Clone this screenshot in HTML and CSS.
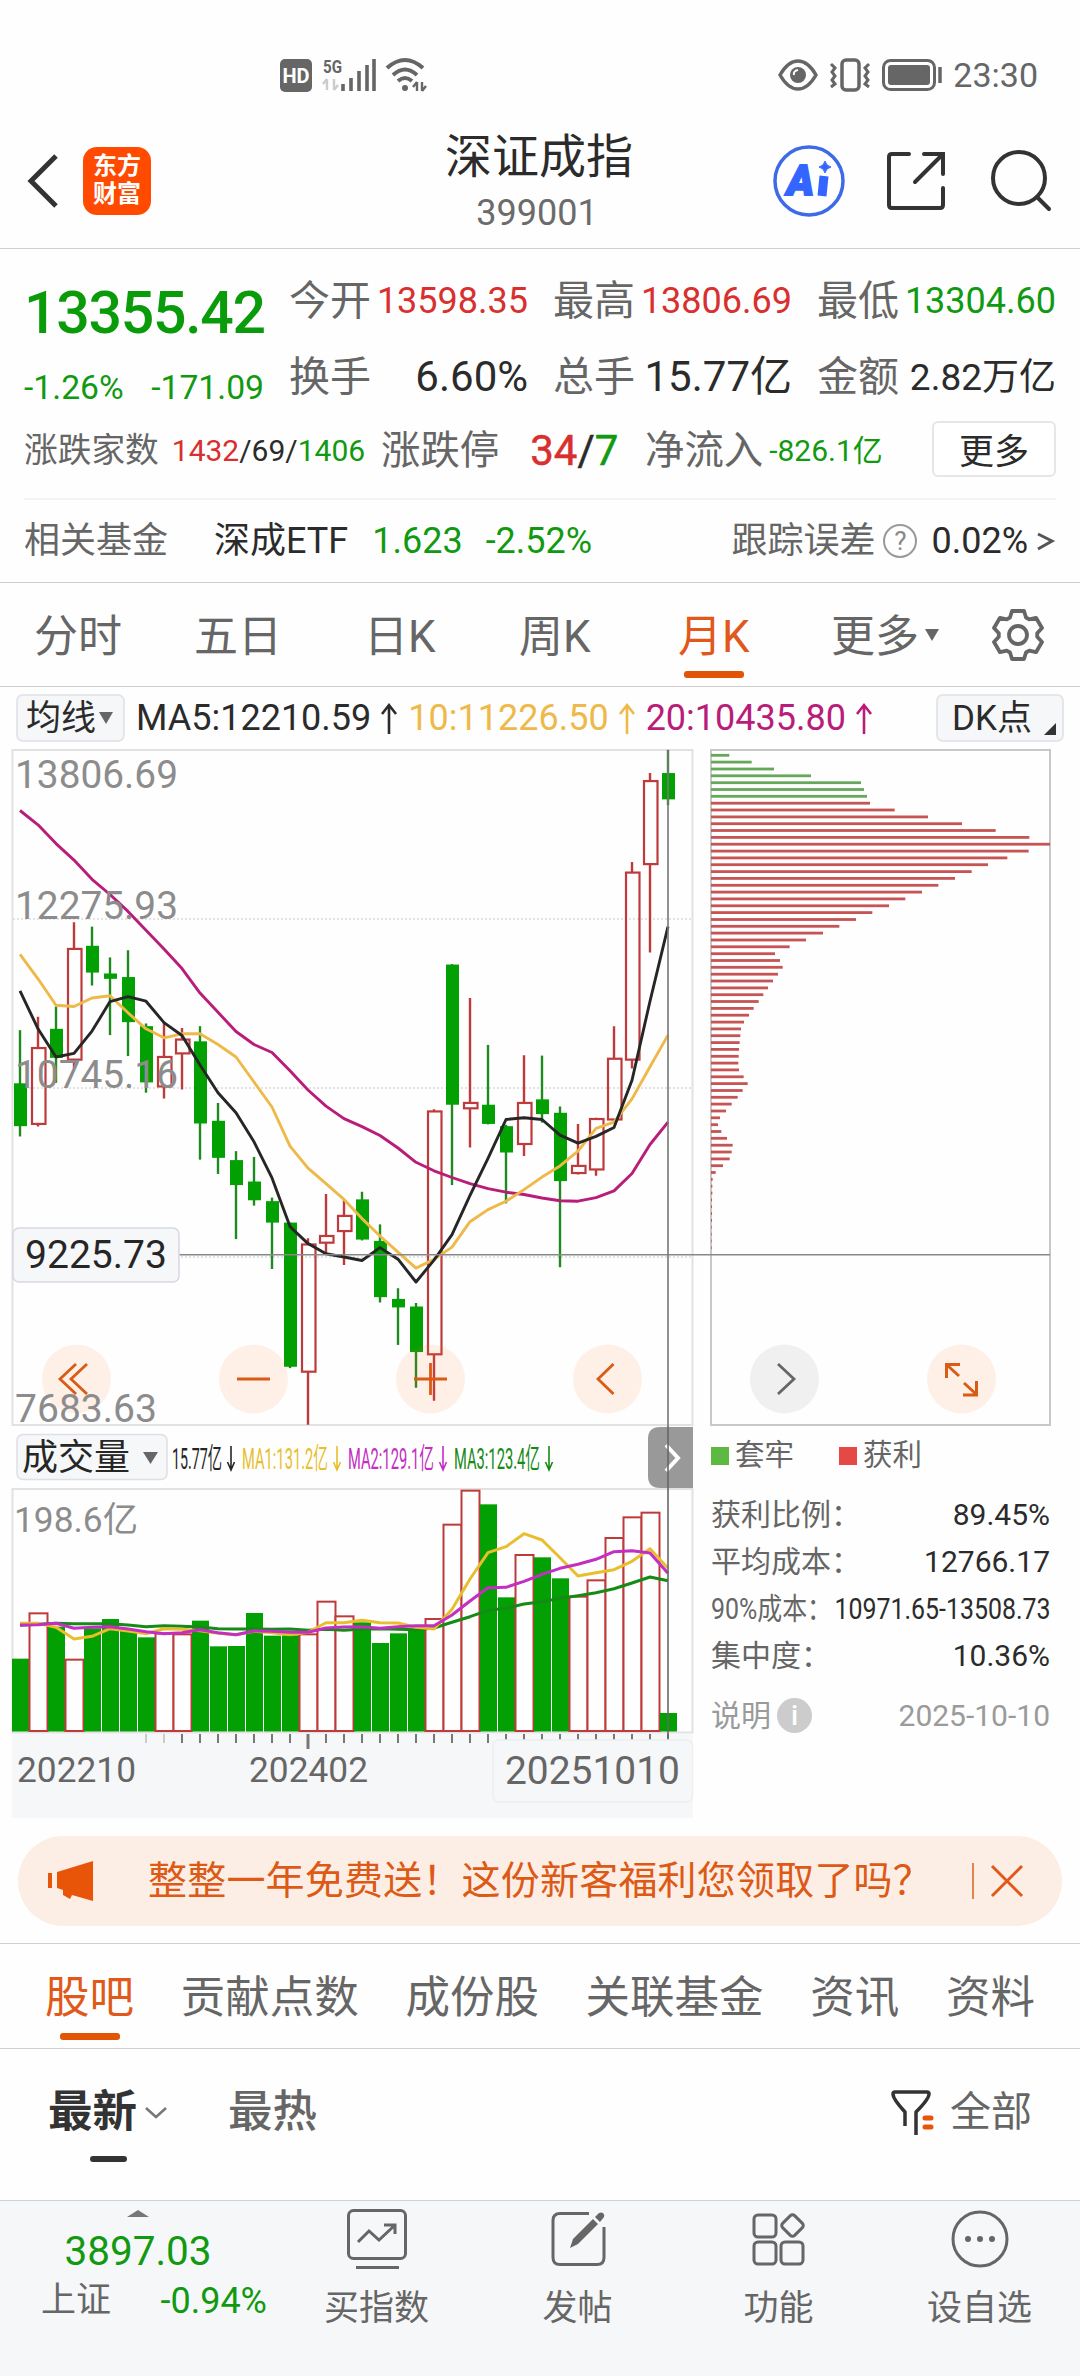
FILE: index.html
```html
<!DOCTYPE html>
<html lang="zh-CN">
<head>
  <meta charset="UTF-8">
  <title>深证成指 399001</title>
  <link rel="stylesheet" href="styles.css">
</head>
<body>
  <div class="status-bar">
    <div class="status-left">
      <span class="hd">HD</span>
      <svg class="signal" width="54" height="36" viewBox="0 0 54 36">
        <text x="0" y="16" class="net" textLength="19" lengthAdjust="spacingAndGlyphs">5G</text>
        <path d="M4 22v11M4 22l-4 5M11 33V22M11 33l4-5" stroke="#ccc" stroke-width="2.4" fill="none"/>
        <path d="M20 27v7M28 21v13M36 14v20M44 8v26M51 2v32" stroke="#666" stroke-width="3.6"/>
      </svg>
      <svg class="wifi" width="42" height="36" viewBox="0 0 42 36" fill="none" stroke="#666" stroke-width="4">
        <path d="M2 11Q20-5 38 11M8 18Q20 7 32 18M13 24Q20 18 27 24"/>
        <circle cx="20" cy="31" r="3" fill="#666" stroke="none"/>
        <path d="M32 25v9M32 25l-4 5M37 34v-9M37 34l4-5" stroke-width="2.4"/>
      </svg>
    </div>
    <div class="status-right">
      <svg width="40" height="36" viewBox="0 0 40 36" fill="none" stroke="#666" stroke-width="3.5">
        <path d="M2 18Q10 4 20 4t18 14Q30 32 20 32T2 18z"/>
        <circle cx="20" cy="18" r="8" fill="#666" stroke="none"/>
        <path d="M16 18q-1-4 4-5" stroke="#fff" stroke-width="2"/>
      </svg>
      <svg width="42" height="36" viewBox="0 0 42 36" fill="none" stroke="#666" stroke-width="3.500">
        <rect x="13" y="3" width="17" height="30" rx="4"/>
        <path d="M2 7l4 4-3 4 3 4-3 4 3 4-4 3M40 7l-4 4 3 4-3 4 3 4-3 4 4 3" stroke-width="3"/>
      </svg>
      <svg width="60" height="36" viewBox="0 0 60 36">
        <rect x="1.5" y="3.5" width="51" height="29" rx="7" fill="none" stroke="#666" stroke-width="3"/>
        <rect x="6" y="8" width="42" height="20" rx="3" fill="#666"/>
        <path d="M58 10v16" stroke="#666" stroke-width="3.5"/>
      </svg>
      <span class="time">23:30</span>
    </div>
  </div>

  <header class="nav">
    <svg class="back" width="34" height="58" viewBox="0 0 34 58"><path d="M30 4L5 29l25 25" fill="none" stroke="#333" stroke-width="5"/></svg>
    <div class="logo">东方<br>财富</div>
    <div class="title">
      <h1>深证成指</h1>
      <p>399001</p>
    </div>
    <div class="nav-icons">
      <svg width="74" height="76" viewBox="0 0 74 76">
        <circle cx="37" cy="38" r="34" fill="none" stroke="#3d6ae8" stroke-width="3.500"/>
        <text x="15" y="52" class="ai" textLength="27" lengthAdjust="spacingAndGlyphs">A</text>
        <path d="M52 33l-2 20" stroke="#3366ff" stroke-width="9"/>
        <path d="M53 18q1 5 6 6-5 1-6 6-1-5-6-6 5-1 6-6z" fill="#3366ff" stroke="#3366ff"/>
      </svg>
      <svg width="62" height="62" viewBox="0 0 62 62" fill="none" stroke="#333" stroke-width="4" stroke-linecap="round">
        <path d="M24 4H7q-3 0-3 3v48q0 3 3 3h48q3 0 3-3V38M39 4h19v20M57 5L30 32"/>
      </svg>
      <svg width="62" height="62" viewBox="0 0 62 62" fill="none" stroke="#333" stroke-width="4" stroke-linecap="round">
        <circle cx="29" cy="28" r="26"/><path d="M47 47l12 12"/>
      </svg>
    </div>
  </header>

  <section class="quote">
    <div class="quote-main">
      <div class="price-box">
        <div class="price">13355.42</div>
        <div class="change"><span>-1.26%</span><span>-171.09</span></div>
      </div>
      <div class="quote-grid">
        <div class="cell"><label>今开</label><b class="up">13598.35</b></div>
        <div class="cell"><label>最高</label><b class="up">13806.69</b></div>
        <div class="cell"><label>最低</label><b class="down">13304.60</b></div>
        <div class="cell"><label>换手</label><b class="big">6.60%</b></div>
        <div class="cell"><label>总手</label><b class="big">15.77亿</b></div>
        <div class="cell"><label>金额</label><b class="mid">2.82万亿</b></div>
      </div>
    </div>
    <div class="quote-extra">
      <div class="ex ex-count"><label>涨跌家数</label><span><i class="up">1432</i>/69/<i class="down">1406</i></span></div>
      <div class="ex ex-limit"><label>涨跌停</label><span><i class="up">34</i>/<i class="down">7</i></span></div>
      <div class="ex ex-flow"><label>净流入</label><span class="down">-826.1亿</span></div>
      <button class="more">更多</button>
    </div>
    <div class="fund">
      <span class="grey">相关基金</span>
      <span class="fund-name">深成ETF</span>
      <span class="down fund-price">1.623</span>
      <span class="down">-2.52%</span>
      <span class="grey track">跟踪误差</span>
      <span class="help">?</span>
      <span>0.02%</span>
      <svg width="20" height="26" viewBox="0 0 20 26"><path d="M2 6l14 7-14 8" fill="none" stroke="#555" stroke-width="3"/></svg>
    </div>
  </section>

  <nav class="period">
    <span>分时</span>
    <span>五日</span>
    <span>日K</span>
    <span>周K</span>
    <span class="active">月K</span>
    <span class="more-period">更多<i class="tri"></i></span>
    <svg width="56" height="56" viewBox="-28 -28 56 56" fill="none" stroke="#666" stroke-width="3.800" stroke-linejoin="round">
      <path d="M-6-24H6L8-17.500 11.200-15.700 18-17.200 24-7 19.200-1.800V1.800L24 7 18 17.200 11.200 15.700 8 17.500 6 24H-6L-8 17.500-11.200 15.700-18 17.200-24 7-19.200 1.800V-1.800L-24-7-18-17.200-11.200-15.700-8-17.500z"/>
      <circle r="9"/>
    </svg>
  </nav>

  <div class="ma-row">
    <span class="chip chip-ma">均线<i class="tri"></i></span>
    <span class="ma ma5">MA5:12210.59<svg width="18" height="34" viewBox="0 0 18 34"><path d="M9 32V3M2 12l7-9 7 9"/></svg></span>
    <span class="ma ma10">10:11226.50<svg width="18" height="34" viewBox="0 0 18 34"><path d="M9 32V3M2 12l7-9 7 9"/></svg></span>
    <span class="ma ma20">20:10435.80<svg width="18" height="34" viewBox="0 0 18 34"><path d="M9 32V3M2 12l7-9 7 9"/></svg></span>
    <span class="chip chip-dk">DK点<i class="corner"></i></span>
  </div>

  <div class="charts">
    <svg id="priceChart" width="1080" height="682" viewBox="0 0 1080 682"></svg>
    <svg id="volChart" width="700" height="392" viewBox="0 0 700 392"></svg>
    <div class="chips-info">
      <div class="legend">
        <span><i class="sq sq-green"></i>套牢</span>
        <span><i class="sq sq-red"></i>获利</span>
      </div>
      <div class="info-line"><label>获利比例：</label><span>89.45%</span></div>
      <div class="info-line"><label>平均成本：</label><span>12766.17</span></div>
      <div class="info-line narrow"><label>90%成本：</label><span>10971.65-13508.73</span></div>
      <div class="info-line"><label>集中度：</label><span>10.36%</span></div>
      <div class="info-line note"><label>说明<i class="info-dot">i</i></label><span>2025-10-10</span></div>
    </div>
  </div>

  <div class="banner">
    <svg width="48" height="42" viewBox="0 0 48 42" fill="#e85508">
      <path d="M1 13h4v15H1zM10 12L46 1v40l-21-6-2 4-7-4v-5l-6-2z"/>
    </svg>
    <p>整整一年免费送！这份新客福利您领取了吗？</p>
    <i class="sep"></i>
    <svg width="34" height="34" viewBox="0 0 34 34"><path d="M2 2l30 30M32 2L2 32" stroke="#e0591a" stroke-width="3"/></svg>
  </div>

  <nav class="section-tabs">
    <span class="active">股吧</span>
    <span>贡献点数</span>
    <span>成份股</span>
    <span>关联基金</span>
    <span>资讯</span>
    <span>资料</span>
  </nav>

  <div class="sort-row">
    <span class="sort active">最新</span>
    <svg class="caret" width="22" height="14" viewBox="0 0 22 14"><path d="M1 2l10 9 10-9" fill="none" stroke="#777" stroke-width="2.500"/></svg>
    <span class="sort hot">最热</span>
    <svg class="funnel" width="46" height="48" viewBox="0 0 46 48" fill="none" stroke="#333" stroke-width="3.500" stroke-linejoin="round">
      <path d="M14 37V23Q2 10 2 5q0-2 2-2h32q2 0 2 2 0 5-13 18v23"/>
      <path d="M34 29h6M34 38h6" stroke="#e85508" stroke-width="5" stroke-linecap="round"/>
    </svg>
    <span class="all">全部</span>
  </div>

  <footer class="bottom">
    <div class="index">
      <i class="tri-up"></i>
      <div class="index-val">3897.03</div>
      <div class="index-row"><span>上证</span><span class="down">-0.94%</span></div>
    </div>
    <div class="tool">
      <svg width="64" height="64" viewBox="0 0 64 64" fill="none" stroke="#666" stroke-width="3">
        <rect x="3.500" y="3.500" width="57" height="48" rx="5"/>
        <path d="M13 35l11-11 10 9 15-14M39 18h11v9M11 60.500h43"/>
      </svg>
      <span>买指数</span>
    </div>
    <div class="tool">
      <svg width="64" height="64" viewBox="0 0 64 64">
        <path d="M43 6.500H14q-7 0-7 7v37q0 7 7 7h37q7 0 7-7V20" fill="none" stroke="#666" stroke-width="3"/>
        <path d="M24 41l3-9 20-20 5 5-20 20zM49 10l4-4q2-1 4 0 2 2 1 4l-4 5z" fill="#666"/>
      </svg>
      <span>发帖</span>
    </div>
    <div class="tool">
      <svg width="64" height="64" viewBox="0 0 64 64" fill="none" stroke="#666" stroke-width="3" stroke-linejoin="round">
        <rect x="7" y="8" width="22" height="22" rx="4"/>
        <rect x="7" y="35" width="22" height="22" rx="4"/>
        <rect x="34" y="35" width="22" height="22" rx="4"/>
        <rect x="37" y="10" width="17" height="17" rx="3" transform="rotate(45 45.500 18.500)"/>
      </svg>
      <span>功能</span>
    </div>
    <div class="tool">
      <svg width="64" height="64" viewBox="0 0 64 64" fill="none" stroke="#666" stroke-width="3">
        <circle cx="32" cy="32" r="27"/>
        <g fill="#666" stroke="none"><circle cx="20" cy="32" r="3"/><circle cx="32" cy="32" r="3"/><circle cx="44" cy="32" r="3"/></g>
      </svg>
      <span>设自选</span>
    </div>
  </footer>
  <script src="chart.js"></script>
</body>
</html>
```
FILE: styles.css
```css
* {
  box-sizing: border-box;
}
body {
  margin: 0;
  width: 1080px;
  height: 2376px;
  overflow: hidden;
  background: #fefefe;
  color: #2b2b2b;
  font-family: Roboto, "Noto Sans CJK SC", sans-serif;
  line-height: 1;
  white-space: nowrap;
  display: flex;
  flex-direction: column;
}
svg {
  display: block;
  flex: none;
}
h1, p {
  margin: 0;
  font-weight: normal;
}
i, b {
  font-style: normal;
  font-weight: normal;
}
.up { color: #d7302f; }
.down { color: #119a11; }
.grey { color: #666; }

/* status bar */
.status-bar {
  height: 120px;
  padding: 30px 42px 0 280px;
  display: flex;
  justify-content: space-between;
  align-items: center;
}
.status-left, .status-right {
  display: flex;
  align-items: center;
}
.hd {
  width: 32px;
  height: 33px;
  background: #666;
  border-radius: 5px;
  color: #fff;
  font-size: 20px;
  font-weight: bold;
  line-height: 34px;
  text-align: center;
}
.signal {
  margin-left: 11px;
  overflow: visible;
}
.wifi { margin-left: 8px; }
.net {
  font-size: 18px;
  font-weight: bold;
  fill: #666;
}
.status-right svg { margin-right: 11px; }
.time {
  font-size: 34px;
  color: #666;
}

/* nav */
.nav {
  height: 129px;
  padding: 0 26px 6px 26px;
  border-bottom: 1px solid #cfcfcf;
  display: flex;
  align-items: center;
}
.back { margin-right: 23px; }
.logo {
  width: 68px;
  height: 68px;
  background: #ff4a00;
  border-radius: 14px;
  color: #fff;
  font-size: 24px;
  font-weight: bold;
  line-height: 28px;
  padding-top: 5px;
  text-align: center;
}
.title {
  width: 240px;
  margin-left: 266px;
  padding-top: 6px;
  text-align: center;
}
.title h1 {
  font-size: 47px;
  margin-left: 4px;
  line-height: 58px;
}
.title p {
  font-size: 36px;
  line-height: 54px;
  color: #6b6b6b;
}
.nav-icons {
  margin-left: auto;
  margin-right: 2px;
  display: flex;
  align-items: center;
  gap: 39px;
}
.nav-icons svg:nth-child(2) { margin-right: 4px; }
.ai {
  font: italic 900 42px Roboto, sans-serif;
  fill: #3366ff;
  stroke: #3366ff;
  stroke-width: 2;
}

/* quote */
.quote {
  height: 334px;
  padding: 0 24px;
  border-bottom: 1px solid #cfcfcf;
}
.quote-main {
  height: 164px;
  padding-top: 14px;
  display: flex;
}
.price-box {
  width: 265px;
  padding-top: 20px;
}
.price {
  font-size: 59px;
  font-weight: 500;
  line-height: 60px;
  color: #0a9b0a;
  letter-spacing: -1.300px;
}
.change {
  width: 240px;
  display: flex;
  justify-content: space-between;
  font-size: 33.700px;
  line-height: 90px;
  color: #119a11;
}
.quote-grid {
  flex: 1;
  display: grid;
  grid-template-columns: repeat(3, 239px);
  grid-auto-rows: 76px;
  column-gap: 25px;
}
.cell {
  display: flex;
  align-items: center;
  justify-content: space-between;
}
.cell label {
  font-size: 41px;
  color: #666;
}
.cell b { font-size: 36px; }
.cell .big { font-size: 42px; }
.cell .mid { font-size: 37px; }
.quote-extra {
  height: 87px;
  padding-top: 1px;
  border-bottom: 2px solid #f3f3f3;
  display: flex;
}
.ex {
  height: 74px;
  display: flex;
  align-items: center;
}
.ex label {
  color: #666;
  font-size: 39.400px;
}
.ex-count { width: 357px; font-size: 30px; }
.ex-count label { font-size: 33.700px; margin-right: 13px; }
.ex-limit {
  width: 264px;
  font-size: 42px;
}
.ex-limit span {
  margin-left: 31px;
  -webkit-text-stroke: 0.5px;
}
.ex-flow span { font-size: 30px; margin-left: 6px; }
.more {
  width: 124px;
  height: 56px;
  margin: 7px 0 0 auto;
  border: 2px solid #e6e6e6;
  border-radius: 6px;
  background: #fff;
  color: #2b2b2b;
  font: 35px "Noto Sans CJK SC", sans-serif;
  line-height: 46px;
  padding: 0;
}
.fund {
  height: 81px;
  display: flex;
  align-items: center;
  font-size: 36px;
}
.fund-name { margin-left: 46px; }
.fund-price { margin: 0 23px 0 24px; }
.fund .track { margin-left: auto; }
.help {
  width: 34px;
  height: 34px;
  margin: 0 14px 0 8px;
  border: 2px solid #999;
  border-radius: 50%;
  color: #888;
  font-size: 26px;
  line-height: 31px;
  text-align: center;
}
.fund svg { margin-left: 8px; }

/* period tabs */
.period {
  height: 104px;
  padding: 0 34px;
  border-bottom: 1px solid #cfcfcf;
  display: grid;
  grid-template-columns: 160px 170px 155px 159px 153px 1fr 56px;
  align-items: center;
  font-size: 44px;
  color: #666;
}
.period span {
  height: 102px;
  line-height: 106px;
  display: flex;
  justify-self: start;
}
.period .active {
  color: #e0591a;
  position: relative;
}
.active::after {
  content: "";
  position: absolute;
  left: 50%;
  bottom: 8px;
  width: 60px;
  height: 7px;
  margin-left: -30px;
  border-radius: 3px;
  background: #e25507;
}
.tri {
  display: inline-block;
  border: 7px solid transparent;
  border-top: 12px solid #666;
  border-bottom: 0;
}
.period .tri { margin: 45px 0 0 6px; }

/* ma row */
.ma-row {
  height: 57px;
  padding: 5px 16px 0;
  display: flex;
  align-items: center;
  font-size: 36px;
}
.chip {
  height: 48px;
  border: 2px solid #e4e6ea;
  border-radius: 7px;
  background: #f6f7f9;
  display: flex;
  align-items: center;
  font-size: 35px;
}
.chip-ma {
  width: 109px;
  padding-left: 8px;
  margin-right: 11px;
}
.chip-ma .tri { margin-left: 3px; }
.chip-dk {
  width: 128px;
  margin-left: auto;
  padding-left: 14px;
}
.corner {
  margin: 22px 0 0 12px;
  border-left: 12px solid transparent;
  border-bottom: 12px solid #333;
}
.ma {
  display: flex;
  align-items: center;
}
.ma svg {
  margin: 2px 10px 0 9px;
  fill: none;
  stroke: currentColor;
  stroke-width: 2.600;
}
.ma10 { color: #efb94a; }
.ma20 { color: #b81d79; }

/* charts */
.charts {
  display: grid;
  grid-template-columns: 700px 380px;
}
#priceChart { grid-column: 1 / 3; }
.chips-info {
  padding: 6px 30px 0 11px;
}
.legend {
  height: 48px;
  display: flex;
  align-items: center;
  gap: 45px;
  font-size: 29.500px;
  color: #666;
}
.legend span {
  display: flex;
  align-items: center;
}
.sq {
  width: 18px;
  height: 18px;
  margin-right: 6px;
}
.sq-green { background: #5cb944; }
.sq-red { background: #e64848; }
.info-line {
  height: 47px;
  display: flex;
  align-items: center;
  justify-content: space-between;
  font-size: 30px;
}
.legend + .info-line { margin-top: 11px; }
.info-line label {
  color: #666;
  display: flex;
  align-items: center;
}
.info-line.narrow {
  width: 409px;
  transform: scaleX(0.83);
  transform-origin: left center;
}
.info-line.note {
  margin-top: 13px;
}
.info-line.note, .info-line.note label { color: #9a9a9a; }
.info-dot {
  width: 35px;
  height: 35px;
  margin-left: 6px;
  border-radius: 50%;
  background: #ccc;
  color: #fff;
  font: 500 28px/35px Roboto, sans-serif;
  text-align: center;
}

/* banner */
.banner {
  height: 90px;
  margin: 18px 18px 17px;
  padding: 0 38px 0 29px;
  border-radius: 45px;
  background: #fceee5;
  display: flex;
  align-items: center;
}
.banner p {
  margin-left: 53px;
  font-size: 39px;
  letter-spacing: 0.200px;
  color: #dc5a16;
}
.sep {
  width: 2px;
  height: 36px;
  margin-left: auto;
  margin-right: 16px;
  background: #e3834f;
}

/* section tabs */
.section-tabs {
  height: 106px;
  padding: 0 45px;
  border-top: 1px solid #cfcfcf;
  border-bottom: 1px solid #cfcfcf;
  display: flex;
  justify-content: space-between;
  font-size: 44.500px;
  line-height: 109px;
  color: #666;
}
.section-tabs .active {
  height: 104px;
  color: #e0591a;
  position: relative;
}

.sort-row {
  height: 151px;
  padding: 0 48px 24px;
  display: flex;
  align-items: center;
  font-size: 44.500px;
  color: #666;
}
.sort.active {
  position: relative;
  color: #333;
  font-weight: bold;
}
.sort.active::after {
  width: 37px;
  height: 6px;
  margin-left: -3px;
  bottom: -27px;
  background: #333;
}
.caret { margin-left: 8px; }
.hot {
  margin-left: 61px;
  font-weight: 500;
}
.funnel { margin-left: auto; }
.all {
  margin-left: 13px;
  font-size: 41px;
}

/* bottom bar */
.bottom {
  flex: 1;
  background: #f6f7f9;
  border-top: 1px solid #cbd2d8;
  display: flex;
  color: #666;
  font-size: 35px;
}
.index {
  width: 276px;
  padding-top: 9px;
}
.tri-up {
  display: block;
  width: 0;
  margin-left: 127px;
  border: 11px solid transparent;
  border-bottom: 7px solid #777;
  border-top: 0;
}
.index-val {
  font-size: 40.500px;
  line-height: 68px;
  text-align: center;
  color: #119a11;
}
.index-row {
  padding: 0 9px 0 41px;
  display: flex;
  justify-content: space-between;
  line-height: 32px;
}
.index-row .down { font-size: 36px; }
.tool {
  width: 201px;
  padding-top: 6px;
  display: flex;
  flex-direction: column;
  align-items: center;
}
.tool span {
  margin-top: 20px;
}
```
FILE: chart.js
```js
const STEP = 18;      // distance between two months
const FIRST = 20;     // centre of the first month
const GREEN = '#03a003';
const RED = '#bf3b3b';

// [type, high, body top, body bottom, low], scaled by candleY
const candles = [
  ['g', 650, 769, 865, 888], ['r', 620, 690, 860, 866], ['g', 597, 647, 712, 768],
  ['r', 408, 468, 716, 735], ['g', 418, 461, 521, 550], ['g', 487, 523, 535, 661],
  ['g', 471, 531, 632, 708], ['g', 635, 641, 767, 790], ['r', 632, 710, 776, 803],
  ['r', 645, 671, 702, 783], ['g', 641, 675, 859, 940], ['g', 813, 853, 936, 972],
  ['g', 921, 941, 997, 1118], ['g', 934, 989, 1031, 1043], ['g', 1025, 1033, 1081, 1185],
  ['g', 1081, 1081, 1404, 1407], ['r', 1116, 1130, 1415, 1534], ['r', 1017, 1111, 1126, 1150],
  ['r', 1030, 1066, 1100, 1176], ['g', 1012, 1029, 1119, 1121], ['g', 1085, 1122, 1248, 1260],
  ['g', 1228, 1252, 1271, 1355], ['g', 1261, 1269, 1371, 1451], ['r', 827, 832, 1376, 1480],
  ['g', 502, 503, 817, 997], ['r', 578, 813, 825, 913], ['g', 683, 817, 860, 861],
  ['g', 862, 865, 924, 1038], ['r', 706, 813, 905, 932], ['g', 707, 805, 838, 857],
  ['g', 821, 835, 988, 1181], ['r', 860, 954, 970, 973], ['r', 846, 849, 962, 976],
  ['r', 641, 714, 850, 852], ['r', 273, 297, 716, 736], ['r', 74, 92, 278, 476],
  ['g', 22, 74, 133, 146]
];
const ma5 = [562, 647, 710, 702, 652, 586, 575, 585, 633, 662, 728, 790, 835, 900, 981, 1090, 1128, 1151, 1158,
  1166, 1137, 1163, 1214, 1165, 1108, 1020, 937, 850, 846, 850, 885, 903, 888, 868, 762, 585, 418];
const ma10 = [480, 535, 594, 597, 578, 573, 611, 647, 667, 658, 658, 682, 710, 766, 822, 910, 959, 994, 1029,
  1072, 1111, 1147, 1183, 1163, 1136, 1079, 1052, 1033, 1007, 979, 954, 921, 870, 856, 804, 732, 661];
const ma20 = [158, 190, 232, 269, 312, 346, 384, 426, 468, 512, 567, 610, 653, 682, 700, 741, 784, 820, 848,
  866, 886, 914, 946, 965, 980, 994, 1005, 1013, 1018, 1026, 1032, 1033, 1025, 1010, 971, 906, 856];

// bar tops, coloured by the change against the previous close
const volumes = [716, 577, 620, 716, 625, 597, 628, 652, 637, 640, 602, 679, 678, 579, 647, 646, 640, 542, 586,
  607, 669, 640, 629, 594, 311, 209, 253, 532, 402, 412, 475, 527, 478, 351, 289, 275, 879];
const volTypes = candles.map((c, i) => i === 24 ? 'r' : c[0]);
const vol1 = [610, 610, 622, 657, 649, 626, 633, 641, 626, 628, 632, 640, 644, 634, 638, 644, 637, 608, 608,
  601, 608, 609, 622, 627, 568, 477, 398, 380, 341, 360, 413, 468, 458, 449, 424, 386, 445];
const vol2 = [615, 614, 610, 625, 622, 620, 627, 635, 641, 638, 629, 638, 644, 633, 634, 637, 637, 624, 621,
  620, 625, 620, 617, 617, 585, 543, 503, 502, 484, 463, 445, 433, 418, 395, 392, 399, 460];
const vol3 = [616, 613, 610, 611, 611, 611, 615, 620, 617, 619, 621, 626, 627, 627, 628, 627, 631, 628, 631,
  627, 626, 628, 629, 624, 607, 590, 571, 565, 552, 545, 535, 527, 518, 506, 489, 471, 482];

// cost distribution, bar lengths x3
const costs = [55, 122, 189, 300, 450, 459, 468, 477, 551, 651, 753, 854, 955, 1017, 953, 889, 831, 782, 732,
  682, 633, 583, 534, 484, 435, 385, 336, 285, 236, 192, 207, 215, 201, 186, 171, 157, 143, 128, 114, 99, 90,
  88, 86, 84, 83, 82, 84, 98, 110, 95, 80, 62, 45, 27, 21, 31, 48, 65, 62, 56, 36, 14, 5, 4, 4, 3, 3, 3, 3,
  2, 2, 2, 2];

const candleY = v => v / 2.24 - 4;
const volY = v => v / 3 - 6;
const px = i => FIRST + STEP * i;

function line(points, toY, color, width) {
  const pts = points.map((v, i) => `${px(i)},${toY(v).toFixed(1)}`).join(' ');
  return `<polyline points="${pts}" fill="none" stroke="${color}" stroke-width="${width}" stroke-linejoin="round"/>`;
}
function rect(x, y, w, h, attrs) {
  return `<rect x="${x}" y="${y}" width="${w}" height="${h}" ${attrs}/>`;
}
function path(d, color, width, extra = '') {
  return `<path d="${d}" fill="none" stroke="${color}" stroke-width="${width}" ${extra}/>`;
}
function text(str, x, y, size, w, color) {
  return `<text x="${x}" y="${y}" font-size="${size}" textLength="${w}" lengthAdjust="spacingAndGlyphs" fill="${color}">${str}</text>`;
}

function drawPrice() {
  let s = rect(12.5, 6, 680, 675, 'fill="none" stroke="#e2e2e2" stroke-width="2"');
  [175, 344, 513].forEach(y => {
    s += path(`M13 ${y}H692`, '#dcdcdc', 1.5, 'stroke-dasharray="2 2"');
  });

  candles.forEach(([type, high, top, bottom, low], i) => {
    const x = px(i);
    const [h, t, b, l] = [high, top, bottom, low].map(candleY);
    if (type === 'g') {
      s += path(`M${x} ${h}V${l}`, '#1f8a1f', 2.4);
      s += rect(x - 6, t, 13, b - t, `fill="${GREEN}"`);
    } else {
      s += path(`M${x} ${h}V${t}M${x} ${b}V${l}`, RED, 2.4);
      s += rect(x - 6, t, 13.5, b - t, `fill="none" stroke="${RED}" stroke-width="2.2"`);
    }
  });

  // button plates
  [76.5, 253.5, 430.5, 607.5, 784.5, 961.5].forEach((x, i) => {
    s += `<circle cx="${x}" cy="635" r="34.500" fill="${i === 4 ? '#777' : '#ff6a20'}" fill-opacity="0.1"/>`;
  });

  s += line(ma20, candleY, '#b81d79', 2.9);
  s += line(ma10, candleY, '#efb94a', 2.9);
  s += line(ma5, candleY, '#262626', 2.9);

  s += text('13806.69', 15, 44, 38, 163, '#8c8c8c');
  s += text('12275.93', 15, 175, 38, 163, '#8c8c8c');
  s += text('10745.16', 15, 344, 38, 163, '#8c8c8c');
  s += text('7683.63', 15, 678, 38, 142, '#8c8c8c');

  // cost distribution
  s += rect(711, 6, 339, 675, 'fill="none" stroke="#c8c8c8" stroke-width="2"');
  costs.forEach((w, i) => {
    s += rect(711, (9.9 + i * 6.84).toFixed(1), w / 3, 2.8, `fill="${i < 7 ? '#66a85a' : '#c75454'}"`);
  });

  // crosshair and its price
  s += path('M179 510.700H1050', '#888', 1.6) + path('M668 6V682', '#777', 1.6);
  s += rect(13, 484, 166, 54, 'rx="6" fill="#f6f7f9" stroke="#d5d9df" stroke-width="1.500"');
  s += text('9225.73', 25, 524, 38, 142, '#262626');

  // button icons
  s += path('M76 620L60 635l16 15M87 620L71 635l16 15M237 635h33M414 635h33M430.500 619v32M613.500 620L598 635l15.500 15', '#d95b14', 2.8);
  s += path('M778 620l16 15-16 15', '#666', 2.8);
  s += path('M960 620.500H946.500V634M947 621l12 11M963 651H976.500V637M976 650l-12-11', '#d95b14', 3);
  document.getElementById('priceChart').innerHTML = s;
}

function drawVolume() {
  let s = '';
  // indicator picker and averages
  s += rect(17, 8.5, 150, 45, 'rx="6" fill="#f6f7f9" stroke="#dde0e5" stroke-width="1.500"');
  s += text('成交量', 22, 44, 36, 108, '#262626');
  s += '<path d="M143 26h15l-7.500 12z" fill="#666"/>';
  [['15.77亿', 172, 50, '#262626'], ['MA1:131.2亿', 242, 86, '#e8be2c'],
    ['MA2:129.1亿', 348, 86, '#c22fc2'], ['MA3:123.4亿', 454, 86, '#168a16']].forEach(([t, x, w, c]) => {
    s += text(t, x, 43, 29, w, c);
    s += path(`M${x + w + 9} 20v24m-3.500-8l3.500 8 3.500-8`, c, 1.6);
  });

  // volume bars
  s += rect(12.5, 63, 680, 243.5, 'fill="none" stroke="#e2e2e2" stroke-width="2"');
  volumes.forEach((v, i) => {
    const x = px(i), y = volY(v);
    if (volTypes[i] === 'g') {
      s += rect(x - 8, y, 17, 305.5 - y, `fill="${GREEN}"`);
    } else {
      s += rect(x - 8.5, y + 1, 18, 304 - y, `fill="#fefefe" stroke="${RED}" stroke-width="2"`);
    }
  });
  s += line(vol3, volY, '#168a16', 3);
  s += line(vol1, volY, '#e8be2c', 3);
  s += line(vol2, volY, '#c22fc2', 3);
  s += text('198.6亿', 14, 106, 35, 124, '#8c8c8c');

  // time axis
  s += rect(12, 308, 681, 84, 'fill="#f6f7f9"');
  for (let i = 7; i < 37; i++) {
    s += path(`M${px(i)} 308v${i === 16 ? 15 : 9}`, i < 9 ? '#ccc' : '#777', i === 16 ? 3 : 2);
  }
  s += rect(493, 314, 199.5, 62, 'rx="6" fill="#f6f7f9" stroke="#eceef1" stroke-width="1.500"');
  s += text('202210', 17, 356, 35.5, 119, '#666');
  s += text('202402', 249, 356, 35.5, 119, '#666');
  s += text('20251010', 505, 358, 39, 175, '#666');

  // panel toggle
  s += '<path d="M693 1h-33q-12 0-12 12v37q0 12 12 12h33z" fill="#999"/>';
  s += path('M666 19l12 13-12 13', '#fff', 4);
  s += path('M668 0V312', '#666', 1.6);
  document.getElementById('volChart').innerHTML = s;
}

drawPrice();
drawVolume();
```
